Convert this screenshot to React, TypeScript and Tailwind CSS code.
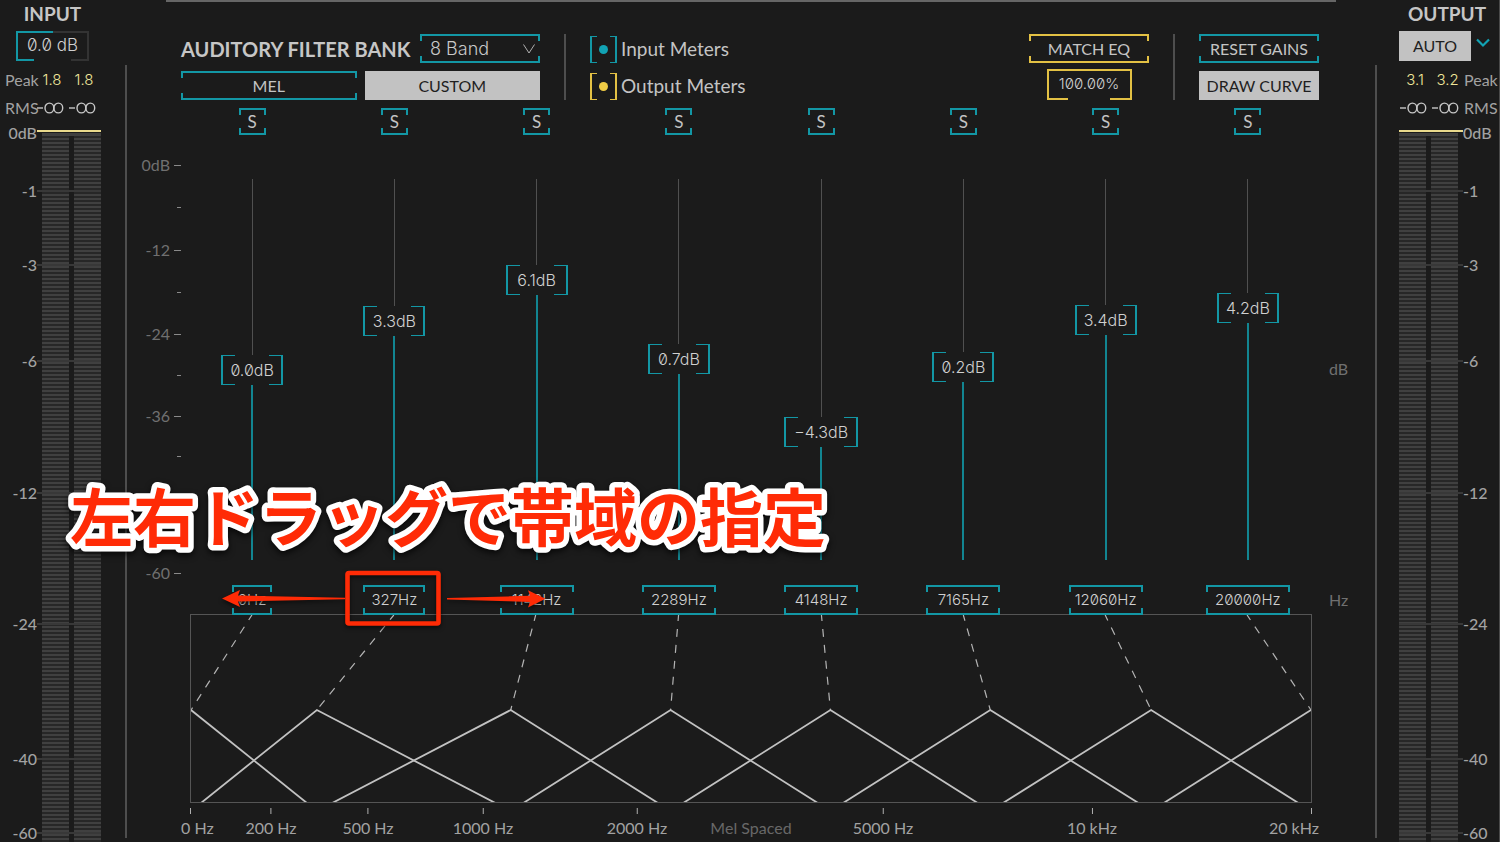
import { useState } from "react";
import type { ReactNode } from "react";

const DIGITS = "font-['Inter',sans-serif] font-light slashed-zero";

type Tone = "teal" | "yellow" | "gray";

const TONES: Record<Tone, string> = {
  teal: "border-[#1397a5]",
  yellow: "border-[#e3c144]",
  gray: "border-[#333333]",
};

/* Full top and bottom edges with short ticks down the sides. */
function RailFrame({ tone = "teal" }: { tone?: Tone }) {
  return (
    <span aria-hidden="true" className="pointer-events-none absolute inset-0">
      <span className={`absolute inset-x-0 top-0 h-[7px] border-x-2 border-t-2 ${TONES[tone]}`} />
      <span className={`absolute inset-x-0 bottom-0 h-[7px] border-x-2 border-b-2 ${TONES[tone]}`} />
    </span>
  );
}

/* Square brackets: full side edges with short ticks along top and bottom. */
function BracketFrame({ tone = "teal", small = false }: { tone?: Tone; small?: boolean }) {
  const width = small ? "w-[7px]" : "w-3.5";
  return (
    <span aria-hidden="true" className="pointer-events-none absolute inset-0">
      <span className={`absolute inset-y-0 left-0 border-y border-l-2 ${width} ${TONES[tone]}`} />
      <span className={`absolute inset-y-0 right-0 border-y border-r-2 ${width} ${TONES[tone]}`} />
    </span>
  );
}

/* Value box with an open bottom edge and a tone for each half. */
function OpenFrame({ left, right }: { left: Tone; right: Tone }) {
  return (
    <span aria-hidden="true" className="pointer-events-none absolute inset-0">
      <span className={`absolute inset-y-0 left-0 w-1/2 border-t-2 border-l-2 ${TONES[left]}`} />
      <span className={`absolute inset-y-0 right-0 w-1/2 border-t-2 border-r-2 ${TONES[right]}`} />
      <span className={`absolute bottom-0 left-0 w-1/4 border-b-2 ${TONES[left]}`} />
      <span className={`absolute right-0 bottom-0 w-1/4 border-b-2 ${TONES[right]}`} />
    </span>
  );
}

function OutlineButton({ children, tone }: { children: ReactNode; tone?: Tone }) {
  return (
    <button type="button" className="relative h-[29px] text-[16px] leading-6 text-[#c4c4c4]">
      <RailFrame tone={tone} />
      {children}
    </button>
  );
}

function SolidButton({ children }: { children: ReactNode }) {
  return (
    <button type="button" className="h-[29px] bg-[#c2c2c2] text-[16px] leading-6 text-[#1f1f1f]">
      {children}
    </button>
  );
}

/* ---------- level meters ---------- */

const METER_MARKS = [
  { label: "0dB", gap: 58 },
  { label: "-1", gap: 74 },
  { label: "-3", gap: 96 },
  { label: "-6", gap: 132 },
  { label: "-12", gap: 131 },
  { label: "-24", gap: 135 },
  { label: "-40", gap: 74 },
  { label: "-60", gap: 9 },
];

const STRIPES =
  "w-[27px] bg-[repeating-linear-gradient(to_bottom,#272727_0px,#272727_2px,#404040_2px,#404040_4px)]";

function LevelMeter({ flip = false }: { flip?: boolean }) {
  return (
    <div className="relative flex grow flex-col pt-[7px]">
      <div className={`h-0.5 w-16 bg-[#e9d98c] ${flip ? "ml-[22px]" : "ml-[37px]"}`} />
      <div className={`mt-px h-[3px] w-[59px] bg-[#3f3f3f] ${flip ? "ml-[22px]" : "ml-[42px]"}`} />
      <div className={`flex grow gap-[5px] ${flip ? "ml-[22px]" : "ml-[42px]"}`}>
        <div className={STRIPES} />
        <div className={STRIPES} />
      </div>
      <ol className="absolute inset-0 flex flex-col pt-2.5 text-[16px] font-medium text-[#a2a2a2]">
        {METER_MARKS.map((mark, index) => (
          <li key={mark.label} className="basis-0" style={{ flexGrow: mark.gap }}>
            <div className={`flex h-0 items-center ${flip ? "flex-row-reverse justify-end" : ""}`}>
              <span className={flip ? "w-9 text-left" : "w-[37px] text-right"}>{mark.label}</span>
              <span className={`h-0.5 w-16 ${index ? "bg-[#383838]" : ""} ${flip ? "ml-[22px]" : ""}`} />
            </div>
          </li>
        ))}
      </ol>
    </div>
  );
}

function Infinite() {
  return (
    <svg
      role="img"
      aria-label="minus infinity"
      className="block"
      width="30"
      height="12"
      viewBox="0 0 30 12"
      fill="none"
      stroke="#c8c8c8"
      strokeWidth="1.4"
    >
      <path d="M1 6h6" />
      <ellipse cx="13.4" cy="6" rx="4.4" ry="4.9" />
      <ellipse cx="22.3" cy="6" rx="4.4" ry="4.9" />
    </svg>
  );
}

const PEAK_VALUE = `text-center text-[15px] leading-7 text-[#efe69a] ${DIGITS}`;

function InputPanel() {
  return (
    <aside className="flex w-[125px] shrink-0 flex-col">
      <h2 className="h-7 w-[105px] text-center text-[19px] leading-7 font-bold text-[#c6c6c6]">INPUT</h2>
      <div className="relative mt-[3px] ml-4 h-[30px] w-[73px]">
        <OpenFrame left="teal" right="gray" />
        <input
          aria-label="Input gain"
          defaultValue="0.0 dB"
          className={`block h-7 w-full bg-transparent text-center text-[17px] text-[#d0d0d0] ${DIGITS}`}
        />
      </div>
      <dl className="mt-[5px] mb-px grid grid-cols-[36px_32px_32px] items-center text-[16px] leading-7">
        <dt className="pl-[5px] text-[#a2a2a2]">Peak</dt>
        <dd className={PEAK_VALUE}>1.8</dd>
        <dd className={PEAK_VALUE}>1.8</dd>
        <dt className="pl-[5px] text-[#a2a2a2]">RMS</dt>
        <dd><Infinite /></dd>
        <dd><Infinite /></dd>
      </dl>
      <LevelMeter />
    </aside>
  );
}

function OutputPanel() {
  return (
    <aside className="flex w-[123px] shrink-0 flex-col border-r border-[#4a4a4a]">
      <h2 className="h-7 pl-[18px] text-center text-[19px] leading-7 font-bold text-[#c6c6c6]">OUTPUT</h2>
      <div className="mt-[3px] flex pl-[22px]">
        <button type="button" className="h-[30px] w-[72px] bg-[#c2c2c2] text-[16px] text-[#1f1f1f]">
          AUTO
        </button>
        <button type="button" aria-label="Auto gain options" className="flex h-6 w-6 items-center justify-center">
          <svg width="16" height="10" viewBox="0 0 16 10" fill="none" stroke="#12a3b4" strokeWidth="2.2">
            <path d="M2 1.5l6 6 6-6" />
          </svg>
        </button>
      </div>
      <dl className="mt-[5px] mb-px grid grid-cols-[32px_33px_35px] items-center pl-[22px] text-[16px] leading-7">
        <dt className="col-start-3 row-start-1 text-[#a2a2a2]">Peak</dt>
        <dd className={`row-start-1 ${PEAK_VALUE}`}>3.1</dd>
        <dd className={`row-start-1 ${PEAK_VALUE}`}>3.2</dd>
        <dt className="col-start-3 row-start-2 text-[#a2a2a2]">RMS</dt>
        <dd className="row-start-2"><Infinite /></dd>
        <dd className="row-start-2"><Infinite /></dd>
      </dl>
      <LevelMeter flip />
    </aside>
  );
}

/* ---------- filter bank header ---------- */

function MeterToggle({ label, tone, dot }: { label: string; tone: Tone; dot: string }) {
  return (
    <label className="flex h-[27px] items-center gap-1 text-[19px] text-[#c4c4c4]">
      <span className="relative flex size-[27px] items-center justify-center">
        <BracketFrame tone={tone} small />
        <input type="checkbox" defaultChecked className={`size-[9px] appearance-none rounded-full ${dot}`} />
      </span>
      {label}
    </label>
  );
}

function Header() {
  return (
    <header className="flex pr-14 pl-[54px]">
      <div className="flex w-[359px] flex-col gap-2">
        <div className="flex h-[29px] items-center justify-between">
          <h1 className="text-[20px] leading-7 font-bold whitespace-nowrap text-[#c6c6c6]">AUDITORY FILTER BANK</h1>
          <div className="relative h-[29px] w-[120px]">
            <RailFrame />
            <select
              aria-label="Band count"
              className={`block h-[29px] w-full appearance-none bg-transparent pl-2.5 text-[18px] text-[#c8c8c8] ${DIGITS}`}
            >
              <option>8 Band</option>
              <option>16 Band</option>
            </select>
            <svg
              aria-hidden="true"
              className="pointer-events-none absolute top-2.5 right-[5px]"
              width="12"
              height="10"
              viewBox="0 0 12 10"
              fill="none"
              stroke="#b0b0b0"
            >
              <path d="M0.5 0.5L6 9L11.5 0.5" />
            </svg>
          </div>
        </div>
        <div className="grid grid-cols-2 gap-2">
          <OutlineButton>MEL</OutlineButton>
          <SolidButton>CUSTOM</SolidButton>
        </div>
      </div>
      <div className="ml-6 w-0.5 self-stretch bg-[#4e4e4e]" />
      <div className="ml-6 flex flex-col gap-2.5 pt-0.5">
        <MeterToggle label="Input Meters" tone="teal" dot="bg-[#12a3b4]" />
        <MeterToggle label="Output Meters" tone="yellow" dot="bg-[#f0cc45]" />
      </div>
      <div className="ml-auto flex w-[120px] flex-col gap-1.5">
        <OutlineButton tone="yellow">MATCH EQ</OutlineButton>
        <div className="relative mx-auto h-[31px] w-[85px]">
          <OpenFrame left="yellow" right="yellow" />
          <input
            aria-label="Match amount"
            defaultValue="100.00%"
            className={`block h-[29px] w-full bg-transparent text-center text-[15px] text-[#d0d0d0] ${DIGITS}`}
          />
        </div>
      </div>
      <div className="ml-6 w-0.5 self-stretch bg-[#4e4e4e]" />
      <div className="ml-6 flex w-[120px] flex-col gap-2">
        <OutlineButton>RESET GAINS</OutlineButton>
        <SolidButton>DRAW CURVE</SolidButton>
      </div>
    </header>
  );
}

/* ---------- bands ---------- */

const MAX_GAIN = 12;

const BANDS = [
  { freq: "0Hz", gain: 0, box: "w-10" },
  { freq: "327Hz", gain: 3.3, box: "w-[62px]" },
  { freq: "1142Hz", gain: 6.1, box: "w-[74px]" },
  { freq: "2289Hz", gain: 0.7, box: "w-[74px]" },
  { freq: "4148Hz", gain: -4.3, box: "w-[74px]" },
  { freq: "7165Hz", gain: 0.2, box: "w-[74px]" },
  { freq: "12060Hz", gain: 3.4, box: "w-[74px]" },
  { freq: "20000Hz", gain: 4.2, box: "w-[84px]" },
];

function GainSlider({ name, initial }: { name: string; initial: number }) {
  const [gain, setGain] = useState(initial);
  const text = `${gain < 0 ? "−" : ""}${Math.abs(gain).toFixed(1)}dB`;
  return (
    <div className="relative flex h-[381px] flex-col items-center">
      <span className="w-px bg-[#505050]" style={{ flexGrow: MAX_GAIN - gain }} />
      <output
        className={`relative flex h-[30px] items-center justify-center text-[16px] leading-7 text-[#d0d0d0] ${
          gain < 0 ? "w-[74px]" : "w-[62px]"
        } ${DIGITS}`}
      >
        <BracketFrame />
        {text}
      </output>
      <span className="w-0.5 bg-[#128591]" style={{ flexGrow: MAX_GAIN + gain }} />
      <input
        type="range"
        aria-label={`${name} gain`}
        min={-MAX_GAIN}
        max={MAX_GAIN}
        step={0.1}
        value={gain}
        onChange={(event) => setGain(Number(event.target.value))}
        className="absolute inset-y-0 w-16 cursor-ns-resize opacity-0 [direction:rtl] [writing-mode:vertical-lr]"
      />
    </div>
  );
}

/* Frame and arrows showing which way the frequency box drags. */
function DragHint() {
  return (
    <span aria-hidden="true" className="pointer-events-none absolute top-1/2 left-1/2 z-10 -translate-1/2">
      <svg className="drop-shadow-[0_2px_2px_rgba(0,0,0,0.6)]" width="346" height="60" viewBox="0 0 346 60" fill="#ff2b06">
        <rect x="126.5" y="3" width="91" height="50.5" rx="1.5" fill="none" stroke="#ff2b06" strokeWidth="4.6" />
        <path d="M1 28.5L19 20L17 25.5L124 27.8V29.3L17 31.5L19 37Z" />
        <path d="M226 28.1L309 25.8L307 20.3L324.5 28.8L307 37.5L309 31.9L226 29.5Z" />
      </svg>
    </span>
  );
}

const DB_SCALE = [
  { label: "0dB", gap: 42 },
  { label: "", gap: 43 },
  { label: "-12", gap: 42 },
  { label: "", gap: 42 },
  { label: "-24", gap: 41 },
  { label: "", gap: 41 },
  { label: "-36", gap: 40 },
  { label: "", gap: 117 },
  { label: "-60", gap: 0 },
];

function Bands() {
  return (
    <div className="mt-2 flex">
      <ol className="flex w-[54px] flex-col pt-[57px] pb-[42px] text-[16px] text-[#707070]">
        {DB_SCALE.map((mark, index) => (
          <li key={index} className="basis-0" style={{ flexGrow: mark.gap }}>
            <div className="flex h-0 items-center justify-end gap-1">
              <span>{mark.label}</span>
              <span className={`h-px bg-[#8a8a8a] ${mark.label ? "w-[7px]" : "w-1"}`} />
            </div>
          </li>
        ))}
      </ol>
      <ul className="grid grow grid-cols-8">
        {BANDS.map((band) => (
          <li key={band.freq} className="flex flex-col items-center">
            <button
              type="button"
              aria-label={`Solo ${band.freq}`}
              className="relative mb-11 size-[27px] text-[17px] text-[#c4c4c4]"
            >
              <RailFrame />S
            </button>
            <GainSlider name={band.freq} initial={band.gain} />
            <div className={`relative mt-[25px] h-[30px] ${band.box}`}>
              <RailFrame />
              <input
                aria-label="Band frequency"
                defaultValue={band.freq}
                className={`block h-7 w-full bg-transparent text-center text-[15px] text-[#d0d0d0] ${DIGITS}`}
              />
              {band.freq === "327Hz" && <DragHint />}
            </div>
          </li>
        ))}
      </ul>
      <div className="flex w-14 flex-col justify-end gap-[207px] pb-[3px] pl-2.5 text-[16px] text-[#707070]">
        <span className="leading-6">dB</span>
        <span className="leading-6">Hz</span>
      </div>
    </div>
  );
}

/* ---------- filter response chart ---------- */

const PEAKS = [0, 126, 320, 480, 640, 800, 961, 1121];
const ANCHORS = [61, 203, 345, 488, 631, 773, 915, 1057];

const AXIS = [
  { label: "0 Hz", at: 0, align: "-translate-x-[9px] items-start", tick: "ml-[9px]" },
  { label: "200 Hz", at: 81, align: "-translate-x-1/2 items-center", tick: "" },
  { label: "500 Hz", at: 178, align: "-translate-x-1/2 items-center", tick: "" },
  { label: "1000 Hz", at: 293, align: "-translate-x-1/2 items-center", tick: "" },
  { label: "2000 Hz", at: 447, align: "-translate-x-1/2 items-center", tick: "" },
  { label: "5000 Hz", at: 693, align: "-translate-x-1/2 items-center", tick: "" },
  { label: "10 kHz", at: 902, align: "-translate-x-1/2 items-center", tick: "" },
];

function ResponseChart() {
  return (
    <figure className="mx-[63px] -mt-px">
      <svg
        role="img"
        aria-label="Filter bank response"
        className="block h-[189px] w-full border border-[#555555]"
        viewBox="0 0 1121 187"
        preserveAspectRatio="none"
        fill="none"
      >
        {PEAKS.map((x, i) => (
          <g key={x}>
            <path
              d={`M${ANCHORS[i]} 0L${x} 95`}
              stroke="#b4b4b4"
              strokeWidth="1.2"
              strokeDasharray="8 8"
              strokeDashoffset="2"
              vectorEffect="non-scaling-stroke"
            />
            <path
              d={`${i ? `M${PEAKS[i - 1]} 196L${x} 95` : `M${x} 95`}${i < 7 ? `L${PEAKS[i + 1]} 196` : ""}`}
              stroke="#c2c2c2"
              strokeWidth="1.8"
              vectorEffect="non-scaling-stroke"
            />
          </g>
        ))}
      </svg>
      <figcaption className="relative h-9 text-[16px] text-[#a2a2a2]">
        {AXIS.map((mark) => (
          <span
            key={mark.label}
            className={`absolute top-[5px] flex flex-col whitespace-nowrap ${mark.align}`}
            style={{ left: `${(mark.at / 1122) * 100}%` }}
          >
            <span className={`h-1.5 w-px bg-[#b0b0b0] ${mark.tick}`} />
            <span className="mt-0.5 leading-6">{mark.label}</span>
          </span>
        ))}
        <span className="absolute top-[5px] -right-[7px] flex flex-col items-end whitespace-nowrap">
          <span className="mr-[7px] h-1.5 w-px bg-[#b0b0b0]" />
          <span className="mt-0.5 leading-6">20 kHz</span>
        </span>
        <span className="absolute top-[13px] left-1/2 -translate-x-1/2 leading-6 text-[#686868]">Mel Spaced</span>
      </figcaption>
    </figure>
  );
}

function Callout() {
  return (
    <svg
      className="pointer-events-none absolute top-[470px] left-[60px] z-20 drop-shadow-[0_3px_3px_rgba(0,0,0,0.7)]"
      width="780"
      height="110"
      viewBox="0 0 780 110"
    >
      <text
        x="10"
        y="71"
        className="fill-[#ff2b06] stroke-white stroke-[11px] font-['Noto_Sans_CJK_JP',sans-serif] text-[63px] font-bold [paint-order:stroke_fill] [stroke-linejoin:round]"
      >
        左右ドラッグで帯域の指定
      </text>
    </svg>
  );
}

export default function App() {
  return (
    <div className="relative flex min-h-screen overflow-hidden bg-[#1b1b1b] font-['Lato',sans-serif]">
      <InputPanel />
      <div className="mt-[65px] mb-1 w-0.5 shrink-0 bg-[#4e4e4e]" />
      <main className="min-w-0 grow">
        <div className="mx-[39px] mb-8 h-0.5 bg-[#666666]" />
        <Header />
        <Bands />
        <ResponseChart />
      </main>
      <div className="mt-[65px] mb-1 w-0.5 shrink-0 bg-[#4e4e4e]" />
      <OutputPanel />
      <Callout />
    </div>
  );
}
